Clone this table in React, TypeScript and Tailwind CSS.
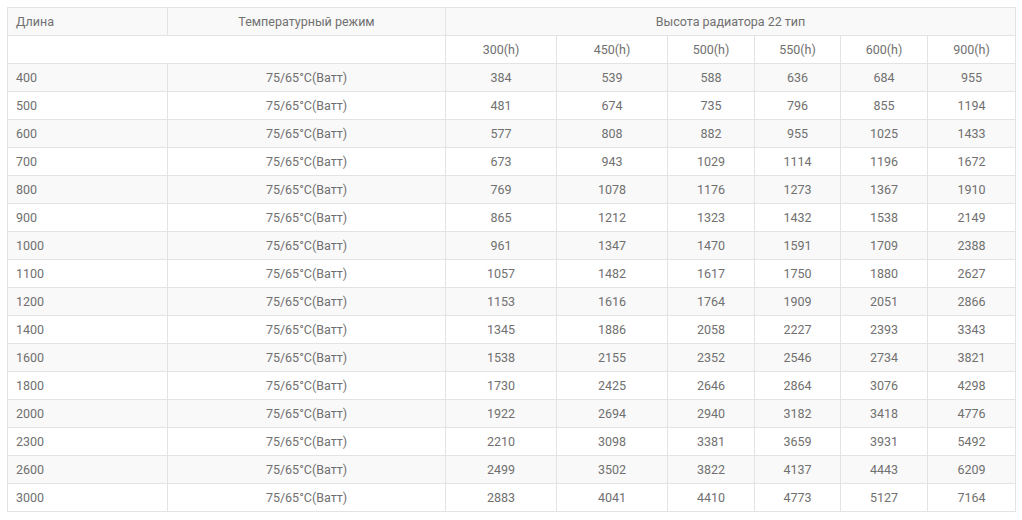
const heights = ["300(h)", "450(h)", "500(h)", "550(h)", "600(h)", "900(h)"];

const rows: [string, number[]][] = [
  ["400", [384, 539, 588, 636, 684, 955]],
  ["500", [481, 674, 735, 796, 855, 1194]],
  ["600", [577, 808, 882, 955, 1025, 1433]],
  ["700", [673, 943, 1029, 1114, 1196, 1672]],
  ["800", [769, 1078, 1176, 1273, 1367, 1910]],
  ["900", [865, 1212, 1323, 1432, 1538, 2149]],
  ["1000", [961, 1347, 1470, 1591, 1709, 2388]],
  ["1100", [1057, 1482, 1617, 1750, 1880, 2627]],
  ["1200", [1153, 1616, 1764, 1909, 2051, 2866]],
  ["1400", [1345, 1886, 2058, 2227, 2393, 3343]],
  ["1600", [1538, 2155, 2352, 2546, 2734, 3821]],
  ["1800", [1730, 2425, 2646, 2864, 3076, 4298]],
  ["2000", [1922, 2694, 2940, 3182, 3418, 4776]],
  ["2300", [2210, 3098, 3381, 3659, 3931, 5492]],
  ["2600", [2499, 3502, 3822, 4137, 4443, 6209]],
  ["3000", [2883, 4041, 4410, 4773, 5127, 7164]],
];

const cell = "border border-[#e3e3e3] h-[28px] pt-[2px] pb-0 px-2 font-normal";

export default function App() {
  return (
    <div className="bg-white w-[1022px] h-[520px] pt-[7px] pl-[7px] font-['Roboto',sans-serif] text-[12.5px] text-[#707070]">
      <table className="table-fixed border-collapse w-[1008px]">
        <colgroup>
          <col className="w-[160px]" />
          <col className="w-[278px]" />
          <col className="w-[111px]" />
          <col className="w-[111px]" />
          <col className="w-[87px]" />
          <col className="w-[86px]" />
          <col className="w-[87px]" />
          <col className="w-[88px]" />
        </colgroup>
        <tbody>
          <tr className="bg-[#f9f9f9]">
            <td className={cell + " text-left"}>Длина</td>
            <td className={cell + " text-center"}>Температурный режим</td>
            <td colSpan={6} className={cell + " text-center"}>
              Высота радиатора 22 тип
            </td>
          </tr>
          <tr className="bg-white">
            <td colSpan={2} className={cell}></td>
            {heights.map((h) => (
              <td key={h} className={cell + " text-center"}>
                {h}
              </td>
            ))}
          </tr>
          {rows.map(([len, vals], i) => (
            <tr key={len} className={i % 2 === 0 ? "bg-[#f9f9f9]" : "bg-white"}>
              <td className={cell + " text-left"}>{len}</td>
              <td className={cell + " text-center"}>75/65°C(Ватт)</td>
              {vals.map((v, j) => (
                <td key={j} className={cell + " text-center"}>
                  {v}
                </td>
              ))}
            </tr>
          ))}
        </tbody>
      </table>
    </div>
  );
}
